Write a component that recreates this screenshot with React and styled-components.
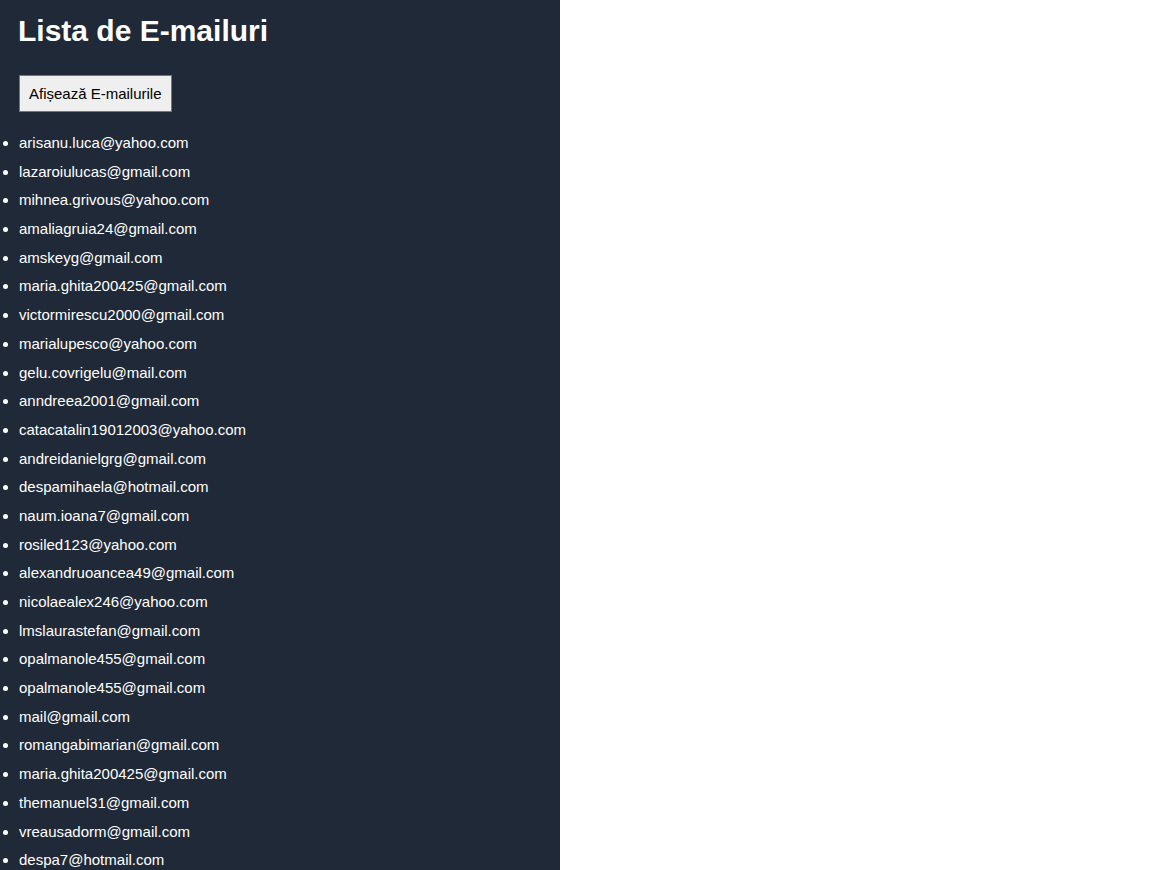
import React from 'react';
import styled, { createGlobalStyle } from 'styled-components';

const emails = [
    'arisanu.luca@yahoo.com',
    'lazaroiulucas@gmail.com',
    'mihnea.grivous@yahoo.com',
    'amaliagruia24@gmail.com',
    'amskeyg@gmail.com',
    'maria.ghita200425@gmail.com',
    'victormirescu2000@gmail.com',
    'marialupesco@yahoo.com',
    'gelu.covrigelu@mail.com',
    'anndreea2001@gmail.com',
    'catacatalin19012003@yahoo.com',
    'andreidanielgrg@gmail.com',
    'despamihaela@hotmail.com',
    'naum.ioana7@gmail.com',
    'rosiled123@yahoo.com',
    'alexandruoancea49@gmail.com',
    'nicolaealex246@yahoo.com',
    'lmslaurastefan@gmail.com',
    'opalmanole455@gmail.com',
    'opalmanole455@gmail.com',
    'mail@gmail.com',
    'romangabimarian@gmail.com',
    'maria.ghita200425@gmail.com',
    'themanuel31@gmail.com',
    'vreausadorm@gmail.com',
    'despa7@hotmail.com',
]

export default function App() {
    return (
        <>
            <GlobalStyle />
            <Panel>
                <Title>Lista de E-mailuri</Title>
                <ShowButton type="button">Afișează E-mailurile</ShowButton>
                <EmailList>
                    {emails.map((email, i) => (
                        <EmailItem key={i}>{email}</EmailItem>
                    ))}
                </EmailList>
            </Panel>
        </>
    )
}

const GlobalStyle = createGlobalStyle`
    body{
        margin: 0;
        background: #ffffff;
        font-family: "Liberation Sans", Arial, sans-serif;
    }
`

const Panel = styled.div`
    width: 560px;
    min-height: 868px;
    box-sizing: border-box;
    background-color: #1f2937;
    color: #ffffff;
    padding: 13px 0 0 18px;
`

const Title = styled.h1`
    margin: 0;
    font-size: 30px;
    font-weight: bold;
    line-height: 36px;
`

const ShowButton = styled.button`
    margin-top: 26px;
    height: 37px;
    padding: 0 9px;
    margin-left: 1px;
    font-family: "Liberation Sans", Arial, sans-serif;
    font-size: 15px;
    color: #000000;
    background-color: #efefef;
    border: 1px solid #767676;
    border-radius: 0;
    cursor: pointer;
`

const EmailList = styled.ul`
    margin: 17px 0 0 0;
    padding: 0 0 0 1px;
    list-style: disc outside;
`

const EmailItem = styled.li`
    font-size: 15px;
    line-height: 28.68px;
`
